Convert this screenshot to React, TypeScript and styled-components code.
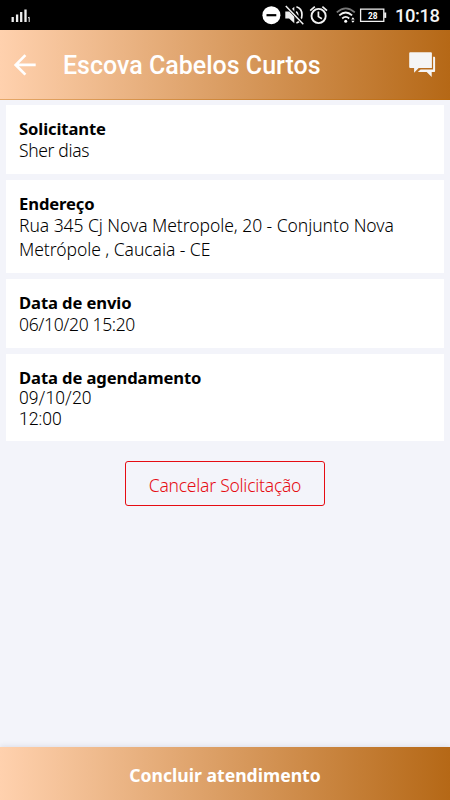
import React from 'react';
import styled, { createGlobalStyle } from 'styled-components';

const GlobalStyle = createGlobalStyle`
  * { box-sizing: border-box; }
  body { margin: 0; background: #f3f4fa; }
`;

const copper = 'linear-gradient(90deg, #ffd1ae 0%, #b56816 100%)';

const Screen = styled.div`
  width: 450px;
  height: 800px;
  display: flex;
  flex-direction: column;
  overflow: hidden;
  background: #f3f4fa;
  color: #000;
  font-family: 'Noto Sans', 'Open Sans', sans-serif;
`;

const StatusBar = styled.div`
  height: 30px;
  flex: none;
  display: flex;
  align-items: center;
  justify-content: space-between;
  background: #000;
`;

const StatusArt = styled.svg`
  display: block;
  flex: none;
`;

const StatusRight = styled.div`
  display: flex;
  align-items: center;
`;

const Clock = styled.span`
  width: 55px;
  padding-top: 2px;
  font: 500 18.4px/28px Roboto, sans-serif;
  letter-spacing: -0.4px;
  white-space: nowrap;
  color: #f4f4f4;
`;

const Header = styled.header`
  height: 70px;
  flex: none;
  display: flex;
  align-items: center;
  padding: 0 12px 0 13px;
  background: ${copper};
  box-shadow: inset 0 -1px rgba(190, 105, 0, 0.4);
`;

const IconButton = styled.button`
  display: flex;
  padding: 0;
  border: 0;
  background: none;
`;

const Title = styled.h1`
  flex: 1;
  margin: 1px 0 0 25px;
  font: 500 25px/32px Roboto, sans-serif;
  white-space: nowrap;
  color: #fff;
`;

const Content = styled.main`
  flex: 1;
  display: flex;
  flex-direction: column;
  gap: 6px;
  padding: 5px 6px 0;
`;

const Card = styled.section<{ $height: number }>`
  height: ${({ $height }) => $height}px;
  flex: none;
  padding: 13px 13px 0;
  background: #fff;
`;

const Label = styled.h2`
  margin: 0 0 -1px;
  font-size: 16.6px;
  font-weight: 700;
  line-height: 22px;
  letter-spacing: -0.1px;
`;

const Value = styled.div<{ $tracking?: number }>`
  font-size: 17.5px;
  font-weight: 350;
  line-height: 23.5px;
  letter-spacing: ${({ $tracking = -0.05 }) => $tracking}px;
  white-space: nowrap;
`;

const Schedule = styled.div`
  font: 300 17.6px/20.5px Roboto, sans-serif;
  white-space: nowrap;
`;

const CancelButton = styled.button`
  width: 200px;
  height: 45px;
  flex: none;
  align-self: center;
  margin-top: 14px;
  padding: 3px 0 0;
  border: 1px solid #e60c12;
  border-radius: 3px;
  background: transparent;
  color: #e60c12;
  font: 350 17.5px/24px 'Noto Sans', 'Open Sans', sans-serif;
  letter-spacing: -0.25px;
`;

const FinishButton = styled.button`
  height: 53px;
  flex: none;
  padding: 2px 0 0;
  border: 0;
  background: ${copper};
  box-shadow: 0 -1px 5px rgba(40, 40, 70, 0.1);
  color: #fff;
  font: 700 17.6px/24px 'Noto Sans', 'Open Sans', sans-serif;
`;

const SignalIcon = () => (
  <StatusArt width="34" height="30" viewBox="0 0 34 30" fill="none" stroke="#eee">
    <path d="M12.7 22v-5M17.1 22v-7.5M21.2 22v-10M25.5 22V9.5" strokeWidth="2.3" />
    <path d="M28 18l1.2-.8V22" strokeWidth="1" />
  </StatusArt>
);

const StatusIcons = () => (
  <StatusArt width="133" height="30" viewBox="262 0 133 30" fill="none" stroke="#f2f2f2">
    <circle cx="271.4" cy="15.2" r="9" fill="#fff" stroke="none" />
    <path d="M266.5 15.2h9.8" stroke="#000" strokeWidth="2.2" />
    <path d="M285.3 11.4h3.8l5.2-4.6v16.4l-5.2-4.6h-3.8z" fill="#eee" stroke="none" />
    <path d="M296.2 11.5q3 3.5 0 7M296.4 6.8c7.4 2.1 7.4 13.8 0 16.2" strokeWidth="1.7" />
    <path d="M286 5.2l18 19" stroke="#000" strokeWidth="3.8" />
    <path d="M285.8 6l17.5 18.2" strokeWidth="1.5" />
    <circle cx="318.6" cy="16" r="7.1" strokeWidth="1.9" />
    <path d="M318.4 11.6v5l3.5 2.2M310.2 10.6l4.6-3.9M322.4 6.7l4.6 3.9" strokeWidth="1.7" />
    <path d="M336.8 12.4q9-8 18 0" stroke="#777" strokeWidth="1.8" />
    <path d="M339.3 15.4q6.4-5.8 12.8 0M342.2 18.5q3.5-3.2 7 0" strokeWidth="1.8" />
    <circle cx="345.7" cy="21.3" r="1.5" fill="#fff" stroke="none" />
    <path d="M351.2 19.4l1.7-2.1 1.7 2.1zM351.2 20.7l1.7 2.1 1.7-2.1z" fill="#fff" stroke="none" />
    <path d="M360.6 9.1h23.2v12.2h-23.2z" strokeWidth="1.3" />
    <path d="M385.2 12.5v5.4" strokeWidth="2" />
    <text x="372.8" y="18.6" textAnchor="middle" fill="#fff" stroke="none" fontFamily="Roboto" fontWeight="700" fontSize="8.4">28</text>
  </StatusArt>
);

const BackIcon = () => (
  <svg width="25" height="24" viewBox="0 0 25 24" fill="none" stroke="#fff" strokeWidth="2.7">
    <path d="M12.4 2.1L2.7 11.9l9.7 9.7M3.2 11.9h19.5" />
  </svg>
);

const ChatIcon = () => (
  <svg width="29" height="26" viewBox="409 51 29 26" fill="#f5f5f5">
    <path d="M410.2 51.2h20.7q1 0 1 1v14.9h-13.2l-4.6 4.6v-4.6h-3.9q-1 0-1-1V52.2q0-1 1-1z" />
    <path d="M433.1 55.8h1.2q.8 0 .8.9v13.4q0 .9-.8.9h-2.6v5l-5-5h-8.9l2.8-2.6h12.5z" />
  </svg>
);

export default function App() {
  return (
    <>
      <GlobalStyle />
      <Screen>
        <StatusBar>
          <SignalIcon />
          <StatusRight>
            <StatusIcons />
            <Clock>10:18</Clock>
          </StatusRight>
        </StatusBar>
        <Header>
          <IconButton aria-label="Voltar"><BackIcon /></IconButton>
          <Title>Escova Cabelos Curtos</Title>
          <IconButton aria-label="Mensagens"><ChatIcon /></IconButton>
        </Header>
        <Content>
          <Card $height={69}>
            <Label>Solicitante</Label>
            <Value $tracking={-0.35}>Sher dias</Value>
          </Card>
          <Card $height={93}>
            <Label>Endereço</Label>
            <Value>Rua 345 Cj Nova Metropole, 20 - Conjunto Nova</Value>
            <Value>Metrópole , Caucaia - CE</Value>
          </Card>
          <Card $height={69}>
            <Label>Data de envio</Label>
            <Value $tracking={-0.35}>06/10/20 15:20</Value>
          </Card>
          <Card $height={87}>
            <Label>Data de agendamento</Label>
            <Schedule>09/10/20</Schedule>
            <Schedule>12:00</Schedule>
          </Card>
          <CancelButton>Cancelar Solicitação</CancelButton>
        </Content>
        <FinishButton>Concluir atendimento</FinishButton>
      </Screen>
    </>
  );
}
